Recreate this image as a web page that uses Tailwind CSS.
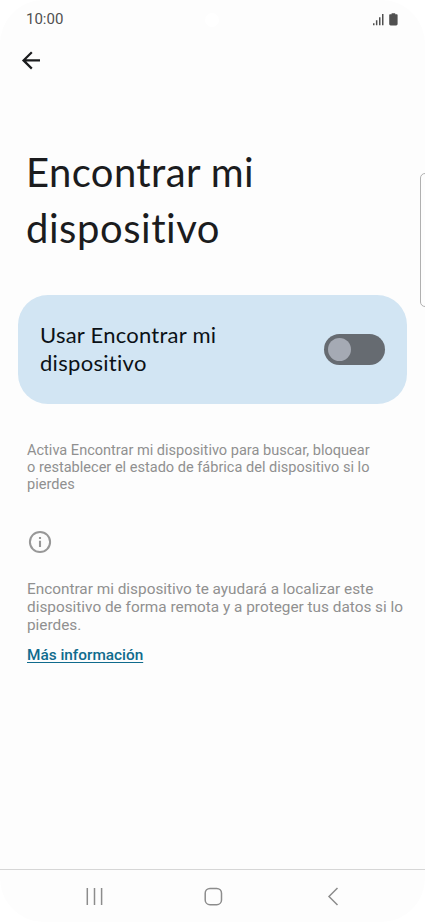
<!DOCTYPE html>
<html lang="es">
<head>
<meta charset="utf-8">
<title>Encontrar mi dispositivo</title>
<script src="https://cdn.jsdelivr.net/npm/@tailwindcss/browser@4"></script>
</head>
<body class="bg-white">
<div class="relative flex h-[922px] w-[425px] flex-col overflow-hidden rounded-t-[44px] rounded-b-[44px] bg-[#fdfdfd] font-['Roboto',sans-serif]">
  <header class="flex h-[38px] shrink-0 items-center justify-between pl-[26px] pr-[26px]">
    <span class="text-[15px] leading-[18px] text-[#505050]">10:00</span>
    <svg class="h-4 w-[27px]" viewBox="0 0 27 16" fill="#505050"><path d="M1 12.2h1.5v2H1zM3.9 9.2h1.5v5H3.9zM7 6.2h1.5v8H7zM10 3h1.5v11.2H10zM19.6 2.2h3.6v1h1.6q.8 0 .8.8v9q0 1.4-1.4 1.4h-5.6q-1.4 0-1.4-1.4V4q0-.8.8-.8h1.6z"/></svg>
  </header>
  <div class="absolute left-[205px] top-[13px] h-[14px] w-[14px] rounded-full bg-white"></div>
  <nav class="h-11 shrink-0 pl-[21px] pt-3">
    <svg class="h-5 w-5" viewBox="0 0 20 20" fill="none" stroke="#1b1c1e" stroke-width="2.2"><path d="M19 10.4H2.8M10.8 2.2 2.5 10.4l8.3 8.2"/></svg>
  </nav>
  <main class="flex-1">
    <h1 class="ml-[26px] mt-[62px] text-[40px] leading-[56px] text-[#1b1c1e] font-['Lato',sans-serif]"><span class="tracking-[0.4px]">Encontrar mi</span><br><span class="tracking-[0.55px]">dispositivo</span></h1>
    <section class="ml-[18px] mt-[39px] flex h-[109px] w-[389px] items-center justify-between rounded-[30px] bg-[#d2e5f3] pl-[22px] pr-[22px]">
      <p class="-mt-[2px] text-[22px] leading-[28px] text-[#0b1116] font-['Lato',sans-serif]"><span class="tracking-[0.25px]">Usar Encontrar mi</span><br><span class="tracking-[0.3px]">dispositivo</span></p>
      <div class="flex h-[31px] w-[61px] items-center rounded-full bg-[#666b71] pl-1"><div class="h-[23px] w-[23px] rounded-full bg-[#a5aab4]"></div></div>
    </section>
    <p class="ml-[27px] mt-[38px] whitespace-nowrap text-[14.55px] leading-[17px] text-[#909090]">Activa Encontrar mi dispositivo para buscar, bloquear<br>o restablecer el estado de fábrica del dispositivo si lo<br>pierdes</p>
    <svg class="ml-[28px] mt-[37px] h-6 w-6" viewBox="0 0 24 24" fill="none" stroke="#989898"><circle cx="12" cy="12" r="10.1" stroke-width="2"/><path d="M12 10.8V17M12 7v2" stroke-width="2.1"/></svg>
    <p class="ml-[27px] mt-[26px] whitespace-nowrap text-[15.35px] leading-[18px] text-[#909090]">Encontrar mi dispositivo te ayudará a localizar este<br>dispositivo de forma remota y a proteger tus datos si lo<br>pierdes.</p>
    <a class="ml-[27px] mt-[12px] block w-fit text-[15.35px] font-medium leading-[18px] text-[#106b8d] underline decoration-1 underline-offset-2">Más información</a>
  </main>
  <div class="absolute left-[420px] top-[173px] h-[134px] w-3 rounded-[5px] border border-[#b0b0b0]"></div>
  <footer class="h-[53px] shrink-0 border-t border-[#d6d6d6]">
    <svg class="h-[52px] w-[425px]" viewBox="0 0 425 52" fill="none" stroke="#8c8c8c" stroke-width="1.5"><path d="M87.3 18v17M94.5 18v17M101.6 18v17M337.5 18 329 26.5l8.5 8.5"/><rect x="205.2" y="18.4" width="16.3" height="16.3" rx="4.8"/></svg>
  </footer>
</div>
</body>
</html>
